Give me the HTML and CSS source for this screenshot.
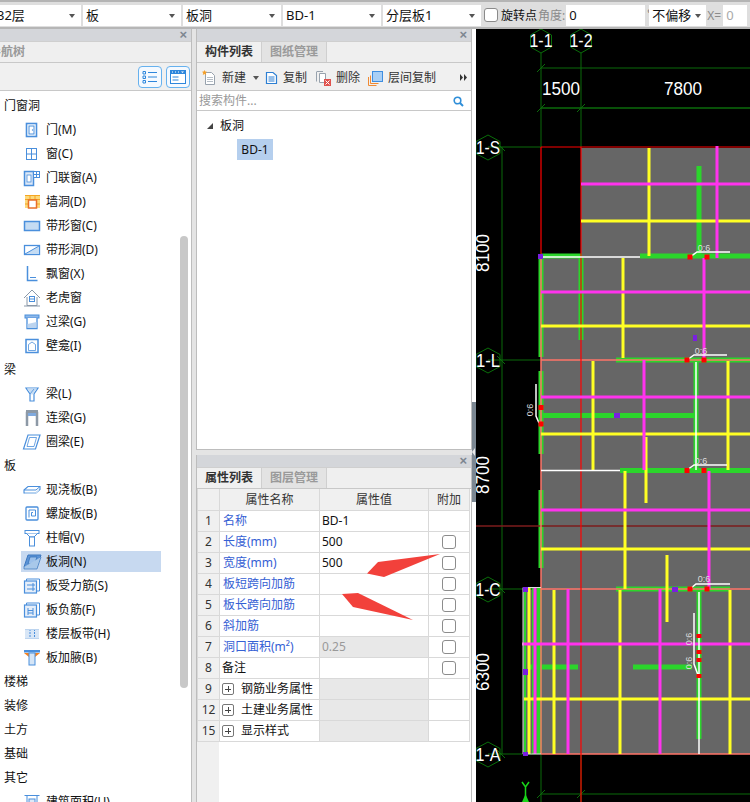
FILE: index.html
```html
<!DOCTYPE html>
<html lang="zh-CN">
<head>
<meta charset="utf-8">
<title>板洞</title>
<link rel="stylesheet" href="styles.css">
</head>
<body>
<svg class="defs" xmlns="http://www.w3.org/2000/svg">
  <symbol id="i-door" viewBox="0 0 20 20"><rect x="4.500" y="3.500" width="10" height="13" fill="#fff" stroke="#4a8fdc" stroke-width="1.600"/><rect x="7" y="6" width="5" height="8" fill="none" stroke="#4a8fdc"/><circle cx="10.500" cy="10" r=".7" fill="#4a8fdc"/></symbol>
  <symbol id="i-win" viewBox="0 0 20 20"><rect x="4.500" y="4.500" width="10" height="11" fill="#fff" stroke="#4a8fdc"/><path d="M9.500 4.500v11M4.500 10h10" stroke="#4a8fdc"/></symbol>
  <symbol id="i-doorwin" viewBox="0 0 20 20"><rect x="2.500" y="3.500" width="9" height="14" fill="#dce8f7" stroke="#4a8fdc" stroke-width="1.500"/><rect x="5" y="7" width="4" height="7" fill="#fff" stroke="#4a8fdc" stroke-width=".8"/><rect x="11.500" y="3.500" width="6" height="6" fill="#fff" stroke="#4a8fdc"/><path d="M14.500 3.500v6M11.500 6.500h6" stroke="#4a8fdc"/></symbol>
  <symbol id="i-hole" viewBox="0 0 20 20"><rect x="3" y="3" width="15" height="13" fill="#fcd97c"/><path d="M3 7.500h15M3 3.500h15M3 12h4M14 12h4M8 3v4M13 3v4" stroke="#f5a623" fill="none"/><rect x="6.500" y="8" width="8" height="8" fill="#fff" stroke="#e8702a" stroke-width="1.500"/></symbol>
  <symbol id="i-band" viewBox="0 0 20 20"><rect x="2.500" y="5.500" width="15" height="9" fill="#c5dcf3" stroke="#4a8fdc" stroke-width="1.500"/></symbol>
  <symbol id="i-bandh" viewBox="0 0 20 20"><rect x="2.500" y="5.500" width="15" height="9" fill="#fff" stroke="#4a8fdc" stroke-width="1.300"/><path d="M3 14L17 6v8z" fill="#c5dcf3"/><path d="M3 14L17 6" stroke="#4a8fdc"/></symbol>
  <symbol id="i-bay" viewBox="0 0 20 20"><path d="M5.500 2v14.500h10" fill="none" stroke="#4a8fdc" stroke-width="1.500"/><path d="M8 13.500h6" stroke="#4a8fdc"/></symbol>
  <symbol id="i-dormer" viewBox="0 0 20 20"><path d="M2 10l8-8 8 8M5 9v8.500h10V9M2 18h16" fill="none" stroke="#8a98a8"/><rect x="7.500" y="8.500" width="5" height="5" fill="#fff" stroke="#4a8fdc"/><path d="M7.500 11h5" stroke="#4a8fdc"/></symbol>
  <symbol id="i-lintel" viewBox="0 0 20 20"><rect x="3" y="3" width="14" height="3" fill="#8fb8e8" stroke="#4a8fdc"/><path d="M5 6v10.500h10V6" fill="#fff" stroke="#4a8fdc" stroke-width="1.300"/><path d="M5.500 16V12l9-2v6z" fill="#bcd4ef"/></symbol>
  <symbol id="i-niche" viewBox="0 0 20 20"><rect x="4" y="3.500" width="12" height="13" fill="#fff" stroke="#4a8fdc" stroke-width="1.500"/><path d="M6.500 14.500V8.500L10 6l3.500 2.500v6z" fill="#fff" stroke="#4a8fdc" stroke-width=".8"/></symbol>
  <symbol id="i-beam" viewBox="0 0 20 20"><path d="M4 4h12l-4 6v7H8v-7z" fill="#fff" stroke="#4a8fdc" stroke-width="1.200"/><path d="M5 4.500h10L10 11z" fill="#c5dcf3"/><path d="M8 10l4-5" stroke="#4a8fdc" stroke-width=".8"/></symbol>
  <symbol id="i-link" viewBox="0 0 20 20"><path d="M5 18V5h10v13" fill="none" stroke="#8d99a6" stroke-width="2.500"/><rect x="4" y="2" width="12" height="2" fill="#8d99a6"/><rect x="6" y="5" width="8" height="3" fill="#7fa9de"/></symbol>
  <symbol id="i-ring" viewBox="0 0 20 20"><path d="M6 3h12l-4.500 14H1.500z" fill="#fff" stroke="#4a8fdc" stroke-width="1.200"/><path d="M7.500 5.500h7L12 14.500H5z" fill="#fff" stroke="#4a8fdc" stroke-width=".8"/></symbol>
  <symbol id="i-cast" viewBox="0 0 20 20"><path d="M2 10l4-3.500h12v3l-4 3.500H2z" fill="#fff" stroke="#4a8fdc" stroke-width="1.100"/><path d="M2 10h12l4-3.500" fill="none" stroke="#4a8fdc"/><path d="M3 13h11l3-3" stroke="#c5dcf3" fill="none"/></symbol>
  <symbol id="i-spiral" viewBox="0 0 20 20"><rect x="4" y="3" width="12" height="13" rx="1" fill="#fff" stroke="#4a8fdc" stroke-width="1.300"/><path d="M7 13.500V6h6.500v6H9.500V8.500h1.500" fill="none" stroke="#4a8fdc"/></symbol>
  <symbol id="i-cap" viewBox="0 0 20 20"><rect x="3" y="2.500" width="14" height="3" fill="#fff" stroke="#4a8fdc"/><path d="M4.500 5.500L8 9h4l3.500-3.500" fill="#fff" stroke="#4a8fdc"/><rect x="7.500" y="9" width="5" height="9" fill="#fff" stroke="#4a8fdc"/></symbol>
  <symbol id="i-open" viewBox="0 0 20 20"><path d="M6 3h13l-4 12H2z" fill="#5b93d6" stroke="#3d78bf"/><path d="M8 5h7l-2.500 7H6z" fill="#9cc0ea" stroke="#2f6db5" stroke-width=".7"/><path d="M2 15v2h13l4-12" fill="#a8c8ea" stroke="#3d78bf" stroke-width=".7"/></symbol>
  <symbol id="i-rebar" viewBox="0 0 20 20"><rect x="2.500" y="5" width="12" height="12" fill="#e5eef9" stroke="#4a8fdc" stroke-width="1.200"/><path d="M4.500 5V3h13v12h-3" fill="none" stroke="#4a8fdc"/><path d="M5 9h8M5 13h8M11 7v8" stroke="#4a8fdc"/></symbol>
  <symbol id="i-neg" viewBox="0 0 20 20"><rect x="2.500" y="5" width="12" height="12" fill="#e5eef9" stroke="#4a8fdc" stroke-width="1.200"/><path d="M4.500 5V3h13v12h-3" fill="none" stroke="#4a8fdc"/><path d="M6 8v7M11 8v7M6 10.500h5M6 13h5" stroke="#4a8fdc"/></symbol>
  <symbol id="i-strip" viewBox="0 0 20 20"><rect x="3" y="5" width="14" height="10" fill="#d8e6f6"/><path d="M8 5v10M12.500 5v10" stroke="#4a8fdc" stroke-dasharray="2 1"/><path d="M3 5.500h14M3 14.500h14" stroke="#bcd4ef"/></symbol>
  <symbol id="i-haunch" viewBox="0 0 20 20"><rect x="2" y="2" width="16" height="2.500" fill="#4a8fdc"/><path d="M2 5h5v4zM18 5h-5v4z" fill="#f58220"/><rect x="7" y="5" width="6" height="12" fill="#d5e5f6" stroke="#4a8fdc"/></symbol>
  <symbol id="i-area" viewBox="0 0 20 20"><path d="M2.500 3.500h15M5 3.500v14h10v-14" fill="none" stroke="#4a8fdc"/><rect x="7" y="7" width="6" height="6" fill="#dce8f7" stroke="#4a8fdc"/></symbol>
</svg>

<div class="topbar">
  <div class="sel sel-first"><span class="clip">32层</span><i class="caret"></i></div>
  <div class="sel"><span>板</span><i class="caret"></i></div>
  <div class="sel"><span>板洞</span><i class="caret"></i></div>
  <div class="sel"><span>BD-1</span><i class="caret"></i></div>
  <div class="sel sel-last"><span>分层板1</span><i class="caret"></i></div>
  <span class="tb-check"></span>
  <span class="tb-label">旋转点</span>
  <span class="tb-label muted">角度:</span>
  <div class="tb-input tb-angle">0</div>
  <span class="tb-deg">°</span>
  <div class="sel sel-offset"><span>不偏移</span><i class="caret"></i></div>
  <span class="tb-label muted tb-x">X=</span>
  <div class="tb-input tb-xval">0</div>
</div>

<div class="main">
  <aside class="nav">
    <div class="titlebar"><span class="close">×</span></div>
    <div class="tabs nav-tabs"><span class="nav-title">导航树</span></div>
    <div class="nav-tools">
      <span class="view-btn"><svg width="16" height="14" viewBox="0 0 16 14"><path d="M1 1.500h2.500v2.500H1zM1 6h2.500v2.500H1zM1 10.500h2.500V13H1z" fill="none" stroke="#2d86dc"/><path d="M6 2.500h9M6 7h9M6 11.500h9" stroke="#2d86dc"/></svg></span>
      <span class="view-btn"><svg width="16" height="14" viewBox="0 0 16 14"><rect x=".5" y=".5" width="15" height="13" fill="#fff" stroke="#2d86dc"/><rect x="0" y="0" width="16" height="4" fill="#2d86dc"/><path d="M2 2h1M5 2h1M8 2h1" stroke="#fff"/><path d="M11 1.500h3l-1.500 1.500z" fill="#fff"/><path d="M2.500 7h6M2.500 10h6" stroke="#2d86dc"/></svg></span>
    </div>
    <div class="tree">
      <div class="grp">门窗洞</div>
      <div class="itm"><svg class="ico"><use href="#i-door"/></svg>门(M)</div>
      <div class="itm"><svg class="ico"><use href="#i-win"/></svg>窗(C)</div>
      <div class="itm"><svg class="ico"><use href="#i-doorwin"/></svg>门联窗(A)</div>
      <div class="itm"><svg class="ico"><use href="#i-hole"/></svg>墙洞(D)</div>
      <div class="itm"><svg class="ico"><use href="#i-band"/></svg>带形窗(C)</div>
      <div class="itm"><svg class="ico"><use href="#i-bandh"/></svg>带形洞(D)</div>
      <div class="itm"><svg class="ico"><use href="#i-bay"/></svg>飘窗(X)</div>
      <div class="itm"><svg class="ico"><use href="#i-dormer"/></svg>老虎窗</div>
      <div class="itm"><svg class="ico"><use href="#i-lintel"/></svg>过梁(G)</div>
      <div class="itm"><svg class="ico"><use href="#i-niche"/></svg>壁龛(I)</div>
      <div class="grp">梁</div>
      <div class="itm"><svg class="ico"><use href="#i-beam"/></svg>梁(L)</div>
      <div class="itm"><svg class="ico"><use href="#i-link"/></svg>连梁(G)</div>
      <div class="itm"><svg class="ico"><use href="#i-ring"/></svg>圈梁(E)</div>
      <div class="grp">板</div>
      <div class="itm"><svg class="ico"><use href="#i-cast"/></svg>现浇板(B)</div>
      <div class="itm"><svg class="ico"><use href="#i-spiral"/></svg>螺旋板(B)</div>
      <div class="itm"><svg class="ico"><use href="#i-cap"/></svg>柱帽(V)</div>
      <div class="itm on"><svg class="ico"><use href="#i-open"/></svg>板洞(N)</div>
      <div class="itm"><svg class="ico"><use href="#i-rebar"/></svg>板受力筋(S)</div>
      <div class="itm"><svg class="ico"><use href="#i-neg"/></svg>板负筋(F)</div>
      <div class="itm"><svg class="ico"><use href="#i-strip"/></svg>楼层板带(H)</div>
      <div class="itm"><svg class="ico"><use href="#i-haunch"/></svg>板加腋(B)</div>
      <div class="grp">楼梯</div>
      <div class="grp">装修</div>
      <div class="grp">土方</div>
      <div class="grp">基础</div>
      <div class="grp">其它</div>
      <div class="itm"><svg class="ico"><use href="#i-area"/></svg>建筑面积(U)</div>
    </div>
    <div class="nav-scroll"></div>
  </aside>

  <div class="mid">
    <section class="panel list-panel">
      <div class="titlebar"><span class="close">×</span></div>
      <div class="tabs"><span class="tab on">构件列表</span><span class="tab">图纸管理</span></div>
      <div class="tools">
        <span class="tool t-new"><svg width="15" height="16" viewBox="0 0 15 16"><path d="M3.500 2.500h6l3 3v9h-9z" fill="#fff" stroke="#98a2ad"/><path d="M5 7.500h6M5 9.500h6M5 11.500h6" stroke="#b5bdc5"/><path d="M2.500 0l.8 1.600L5 1.800 3.800 3 4.200 5 2.500 4 .8 5l.4-2L0 1.800l1.700-.2z" fill="#f5a02a"/></svg>新建<i class="caret tool-caret"></i></span>
        <span class="tool t-copy"><svg width="13" height="14" viewBox="0 0 13 14"><path d="M1.500 1.500h6.500l3.500 3v8h-10z" fill="#fff" stroke="#2d7fd3" stroke-width="1.200"/><path d="M3.500 6h6M3.500 8h6M3.500 10h6" stroke="#2d7fd3"/></svg>复制</span>
        <span class="tool t-del"><svg width="15" height="15" viewBox="0 0 15 15"><path d="M3.500 2.500h6v9h-6z" fill="#fff" stroke="#98a2ad"/><path d="M1 .5h6M.5 .5v10" stroke="#98a2ad"/><rect x="8" y="8" width="7" height="7" fill="#e0524d"/><path d="M9.500 9.500l4 4M13.500 9.500l-4 4" stroke="#fff"/></svg>删除</span>
        <span class="tool t-floor"><svg width="15" height="15" viewBox="0 0 15 15"><path d="M.5 6v8.500h8M2.500 4.500v8h8" fill="none" stroke="#ef8a34"/><rect x="4.500" y=".5" width="10" height="10" fill="#a9cff5" stroke="#3f8ee0"/></svg>层间复制</span>
        <svg class="more" width="7" height="7" viewBox="0 0 7 7"><path d="M0 0l3 3.500L0 7zM4 0l3 3.500L4 7z" fill="#333"/></svg>
      </div>
      <div class="search"><span>搜索构件...</span><svg width="11" height="11" viewBox="0 0 11 11"><circle cx="4.500" cy="4.500" r="3.300" fill="none" stroke="#2f8ed8" stroke-width="1.600"/><path d="M7 7l3 3" stroke="#2f8ed8" stroke-width="2"/></svg></div>
      <div class="list">
        <div class="list-grp"><i class="tri"></i>板洞</div>
        <div class="list-row"><span class="list-sel">BD-1</span></div>
      </div>
    </section>

    <section class="panel prop-panel">
      <div class="titlebar"><span class="close">×</span></div>
      <div class="tabs"><span class="tab on">属性列表</span><span class="tab">图层管理</span></div>
      <div class="prop-body">
        <table class="props">
          <colgroup><col class="c1"><col class="c2"><col class="c3"><col class="c4"></colgroup>
          <tr class="hd"><th></th><th>属性名称</th><th>属性值</th><th>附加</th></tr>
          <tr><td class="n">1</td><td class="k">名称</td><td class="v">BD-1</td><td></td></tr>
          <tr><td class="n">2</td><td class="k">长度(mm)</td><td class="v">500</td><td class="c"><i class="cb"></i></td></tr>
          <tr><td class="n">3</td><td class="k">宽度(mm)</td><td class="v">500</td><td class="c"><i class="cb"></i></td></tr>
          <tr><td class="n">4</td><td class="k">板短跨向加筋</td><td class="v"></td><td class="c"><i class="cb"></i></td></tr>
          <tr><td class="n">5</td><td class="k">板长跨向加筋</td><td class="v"></td><td class="c"><i class="cb"></i></td></tr>
          <tr><td class="n">6</td><td class="k">斜加筋</td><td class="v"></td><td class="c"><i class="cb"></i></td></tr>
          <tr><td class="n">7</td><td class="k">洞口面积(m²)</td><td class="v off">0.25</td><td class="c"><i class="cb"></i></td></tr>
          <tr><td class="n">8</td><td class="b">备注</td><td class="v"></td><td class="c"><i class="cb"></i></td></tr>
          <tr><td class="n">9</td><td class="b"><i class="plus"></i>钢筋业务属性</td><td class="v fill"></td><td></td></tr>
          <tr><td class="n">12</td><td class="b"><i class="plus"></i>土建业务属性</td><td class="v fill"></td><td></td></tr>
          <tr><td class="n">15</td><td class="b"><i class="plus"></i>显示样式</td><td class="v fill"></td><td></td></tr>
        </table>
      </div>
      <svg class="arrows" viewBox="196 455 275 347" width="275" height="347">
        <path d="M367 573.500L378 562 440 554 384 577z" fill="#f2413b"/>
        <path d="M342 594L358 593 413 620 353 607z" fill="#f2413b"/>
      </svg>
    </section>
  </div>

  <div class="split"><span class="grip"></span></div>

  <div class="cad">
    <svg class="cad-svg" viewBox="476 29 274 773" width="274" height="773">
      <!-- slabs -->
      <g class="slab">
        <rect x="581" y="148" width="169" height="108"/>
        <rect x="541" y="256" width="209" height="498"/>
        <rect x="523" y="587" width="18" height="167"/>
      </g>
      <!-- axes -->
      <g class="axis">
        <path d="M541 53V147M581 53V147M541 754V802M581 754V802"/>
        <path d="M541 68H750M541 794H750M488 147H541M488 360H541M488 589H541M488 754H541M502 147V754"/>
        <path class="thick" d="M541 108H750"/>
        <path d="M537 72l8-8M537 112l8-8M577 112l8-8M537 798l8-8M577 798l8-8"/>
        <path d="M497 143l8 8M497 356l8 8M497 585l8 8M497 750l8 8"/>
      </g>
      <g class="hex">
        <path d="M541 29l10.500 6v12l-10.500 6-10.500-6V35z"/>
        <path d="M581 29l10.500 6v12l-10.500 6-10.500-6V35z"/>
        <path d="M488 135l12 6.500v12l-12 6.500-12-6.500v-12z"/>
        <path d="M488 348l12 6.500v12l-12 6.500-12-6.500v-12z"/>
        <path d="M488 577l12 6.500v12l-12 6.500-12-6.500v-12z"/>
        <path d="M488 742l12 6.500v12l-12 6.500-12-6.500v-12z"/>
      </g>
      <!-- green walls -->
      <g class="wall">
        <path d="M699 166V256M541 256H582M640 256H750M581 258V340M541 258V357M541 371V454M541 490V568"/>
        <path d="M616 360H750M543 415.500H694M696 360V470M620 470.500H750M616 589H730M699 590V739"/>
        <path d="M530 667H578M633 667H692M539 588V754"/>
        <path class="narrow" d="M525 590V752M533 588V754"/>
      </g>
      <!-- outlines -->
      <path class="dimred" d="M476 526H750"/>
      <g class="salmon">
        <path d="M541 360H750M541 589H750M541 754H750M541 256V754"/>
      </g>
      <path class="red" d="M541 147H750M541 147V256M581 147V802"/>
      <!-- yellow -->
      <g class="yel">
        <path d="M649 148V256M623 258V358M593 361V471M728 361V470M625 471V589M646 437V503M667 555V622M554 590V754M620 590V754M730 590V754M529 588V754"/>
        <path d="M581 221H750M541 326H750M541 434H750M541 549H750M524 699H750"/>
      </g>
      <!-- magenta -->
      <g class="mag">
        <path d="M717 146V258M704 258V358M644 360V470M709 471V589M568 589V754M660 589V754M535 588V754"/>
        <path d="M581 184H750M541 292H750M541 397H750M541 510H750M522 644H750"/>
      </g>
      <!-- white -->
      <g class="wht">
        <path d="M541 257H640M541 470.500H620M696 362V470"/>
        <path d="M690 257l7-5h33M687 360l7-5h33M687 470l7-5h33M690 589l6-5h34"/>
        <path d="M536 384V416l3 7M694 613V652M694 652V664l4 11M699 592V754"/>
        <path class="thin" d="M523 587.500H541M523 587.500V754H541"/>
      </g>
      <g class="pur">
        <rect x="538" y="254" width="5" height="5"/><rect x="693" y="335" width="4" height="6"/><rect x="614" y="413" width="6" height="5"/>
        <rect x="672" y="587" width="6" height="5"/><rect x="523" y="587" width="5" height="5"/><rect x="523" y="669" width="5" height="6"/><rect x="523" y="752" width="5" height="4"/>
      </g>
      <g class="redsq">
        <rect x="687.500" y="254.500" width="5" height="5"/><rect x="704.500" y="254.500" width="5" height="5"/>
        <rect x="684.500" y="357.500" width="5" height="5"/><rect x="701.500" y="357.500" width="5" height="5"/>
        <rect x="538.500" y="405" width="5" height="5"/><rect x="538.500" y="421.500" width="5" height="5"/>
        <rect x="684.500" y="468" width="5" height="5"/><rect x="701.500" y="468" width="5" height="5"/>
        <rect x="687.500" y="586.500" width="5" height="5"/><rect x="704.500" y="586.500" width="5" height="5"/>
        <rect x="696.500" y="634" width="5" height="4"/><rect x="696.500" y="650" width="5" height="4"/><rect x="696.500" y="658" width="5" height="4"/><rect x="696.500" y="674" width="5" height="4"/>
      </g>
      <!-- Y axis marker -->
      <path class="ymark" d="M522 782l3.500 5 3.500-5M525.500 787V797"/>
      <path class="ytri" d="M525.500 794l3.500 8h-7z"/>
      <!-- texts -->
      <g class="lbl">
        <text x="541" y="47" class="hx" textLength="23" lengthAdjust="spacingAndGlyphs">1-1</text>
        <text x="581" y="47" class="hx" textLength="23" lengthAdjust="spacingAndGlyphs">1-2</text>
        <text x="488" y="154" class="hx" textLength="24" lengthAdjust="spacingAndGlyphs">1-S</text>
        <text x="488" y="367" class="hx" textLength="24" lengthAdjust="spacingAndGlyphs">1-L</text>
        <text x="488" y="596" class="hx" textLength="25" lengthAdjust="spacingAndGlyphs">1-C</text>
        <text x="488" y="761" class="hx" textLength="25" lengthAdjust="spacingAndGlyphs">1-A</text>
        <text x="561" y="95" class="dim" textLength="38" lengthAdjust="spacingAndGlyphs">1500</text>
        <text x="683" y="95" class="dim" textLength="38" lengthAdjust="spacingAndGlyphs">7800</text>
        <text class="dim" transform="translate(489 253) rotate(-90)" textLength="38" lengthAdjust="spacingAndGlyphs">8100</text>
        <text class="dim" transform="translate(489 475) rotate(-90)" textLength="38" lengthAdjust="spacingAndGlyphs">8700</text>
        <text class="dim" transform="translate(489 672) rotate(-90)" textLength="38" lengthAdjust="spacingAndGlyphs">6300</text>
        <text x="704" y="251" class="sm">0:6</text>
        <text x="701" y="354" class="sm">0:6</text>
        <text x="701" y="464" class="sm">0:6</text>
        <text x="704" y="582" class="sm">0:6</text>
        <text class="sm" transform="translate(533 410) rotate(-90)">0:6</text>
        <text class="sm" transform="translate(692 639) rotate(-90)">0:6</text>
        <text class="sm" transform="translate(692 663) rotate(-90)">0:6</text>
      </g>
    </svg>
  </div>
</div>
</body>
</html>
```

FILE: styles.css
```css
* { box-sizing: border-box; }
html, body { margin: 0; padding: 0; }
body {
  width: 750px;
  height: 802px;
  overflow: hidden;
  background: #e4e4e4;
  color: #111;
  font: 12px/1.2 "Noto Sans", "Noto Sans CJK SC", sans-serif;
}
.defs { display: none; }
i { font-style: normal; display: inline-block; }

/* top bar */
.topbar {
  height: 29px;
  padding-top: 3px;
  display: flex;
  align-items: flex-start;
  gap: 2px;
  background: #dedede;
  border-top: 2px solid #b4b4b4;
  border-bottom: 2px solid #b6b6b6;
  overflow: hidden;
}
.sel {
  width: 98px;
  height: 21px;
  flex: none;
  background: #fff;
  display: flex;
  align-items: center;
  justify-content: space-between;
  padding: 0 6px 0 3px;
  font-size: 13px;
}
.sel-first { width: 81px; padding-left: 0; }
.sel-first .clip { margin-left: -3px; }
.caret {
  width: 0;
  height: 0;
  border: 3.500px solid transparent;
  border-top: 4px solid #555;
  border-bottom: 0;
}
.tb-check {
  width: 14px;
  height: 14px;
  margin: 3px 0 0 1px;
  flex: none;
  background: #fff;
  border: 1px solid #8a8a8a;
  border-radius: 3px;
}
.tb-label { line-height: 21px; flex: none; font-size: 12px; margin-left: 1px; }
.muted { color: #8b8b8b; }
.tb-input {
  height: 21px;
  flex: none;
  background: #fff;
  padding-left: 3px;
  line-height: 21px;
  font-size: 13px;
}
.tb-label.muted { margin-left: -1px; }
.tb-angle { width: 79px; margin-left: -1px; }
.tb-deg { width: 4px; margin-right: -4px; color: #777; line-height: 18px; flex: none; }
.sel-offset { width: 57px; padding-left: 3px; padding-right: 5px; }
.tb-x { margin-left: 0; }
.tb-xval { width: 24px; color: #aaa; }

/* main layout */
.main { height: 773px; display: flex; }
.nav {
  position: relative;
  width: 192px;
  flex: none;
  background: #fff;
  border-right: 1px solid #bdbdbd;
  display: flex;
  flex-direction: column;
  overflow: hidden;
}
.mid {
  width: 276px;
  margin-left: 4px;
  flex: none;
  display: flex;
  flex-direction: column;
  gap: 5px;
}
.panel {
  position: relative;
  background: #fff;
  border-left: 1px solid #bdbdbd;
  border-right: 1px solid #bdbdbd;
  display: flex;
  flex-direction: column;
}
.list-panel { height: 421px; border-bottom: 1px solid #bdbdbd; }
.prop-panel { flex: 1; min-height: 0; overflow: hidden; }
.titlebar {
  height: 12px;
  flex: none;
  background: #d4d6da;
  display: flex;
  justify-content: flex-end;
  align-items: center;
  padding-right: 4px;
}
.close { color: #7d8690; font: bold 13px/12px "Liberation Sans", sans-serif; }
.tabs {
  height: 22px;
  flex: none;
  display: flex;
  background: #efefef;
  border-bottom: 1px solid #c8c8c8;
  border-top: 1px solid #cfcfcf;
}
.tab {
  width: 65px;
  text-align: center;
  font-weight: 700;
  line-height: 20px;
  color: #9a9a9a;
  background: #e3e3e3;
  border-right: 1px solid #cfcfcf;
}
.tab.on { color: #333; background: #f0f0f0; }

/* navigator */
.nav-title { margin-left: -11px; font-weight: 700; color: #999; line-height: 20px; }
.nav-tools {
  height: 28px;
  flex: none;
  background: #f0f0f0;
  border-bottom: 1px solid #c8c8c8;
  display: flex;
  justify-content: flex-end;
  gap: 4px;
  padding: 3px 1px 0 0;
}
.view-btn {
  width: 24px;
  height: 22px;
  background: #f4f9ff;
  border: 1px solid #66b1ee;
  border-radius: 4px;
  display: flex;
  align-items: center;
  justify-content: center;
}
.tree { padding-top: 3px; flex: 1; min-height: 0; overflow: hidden; }
.grp, .itm {
  height: 24px;
  display: flex;
  align-items: center;
  white-space: nowrap;
}
.grp { padding-left: 4px; }
.itm { width: 140px; margin-left: 21px; padding-left: 1px; gap: 4px; }
.itm.on { background: linear-gradient(#0000 1px, #c7d9f0 1px, #c7d9f0 22px, #0000 22px); }
.ico { width: 20px; height: 20px; flex: none; }
.nav-scroll {
  position: absolute;
  left: 180px;
  top: 207px;
  width: 8px;
  height: 452px;
  background: #c8c8c8;
  border-radius: 4px;
}

/* component list */
.tools {
  height: 28px;
  flex: none;
  display: flex;
  align-items: center;
  position: relative;
  background: #f0f0f0;
  border-bottom: 1px solid #c8c8c8;
  padding: 3px 0 0 5px;
  color: #333;
}
.tool { display: flex; align-items: center; gap: 5px; white-space: nowrap; }
.t-new { width: 63px; }
.t-copy { width: 51px; }
.t-del { width: 52px; }
.t-floor { width: 76px; }
.tool-caret { margin-left: 2px; }
.more { position: absolute; right: 4px; top: 11px; }
.search {
  height: 20px;
  flex: none;
  display: flex;
  align-items: center;
  justify-content: space-between;
  color: #999;
  padding: 2px 7px 0 2px;
  border-bottom: 1px solid #c8c8c8;
}
.list { flex: 1; }
.list-grp {
  height: 28px;
  padding: 2px 0 0 10px;
  display: flex;
  align-items: center;
  gap: 7px;
}
.tri {
  width: 0;
  height: 0;
  border-left: 6px solid transparent;
  border-bottom: 6px solid #444;
}
.list-row { height: 21px; padding-left: 40px; }
.list-sel {
  display: block;
  width: 36px;
  height: 21px;
  line-height: 21px;
  text-align: center;
  background: #b5cfee;
}

/* properties */
.prop-body {
  flex: 1;
  background: linear-gradient(90deg, #f0f0f0 22px, #fff 22px);
}
.props { border-collapse: collapse; table-layout: fixed; width: 272px; }
.c1 { width: 22px; }
.c2 { width: 100px; }
.c3 { width: 109px; }
.c4 { width: 41px; }
.props tr { height: 21px; }
.props th, .props td {
  height: 21px;
  padding: 1px 0 0;
  line-height: 14px;
  border: 1px solid #d9d9d9;
  border-top: 0;
  white-space: nowrap;
  overflow: hidden;
}
.props th { font-weight: 400; background: #f0f0f0; color: #333; }
.props .n { background: #f0f0f0; text-align: center; color: #333; }
.props .k { color: #3560d4; padding-left: 3px; }
.props .b { padding-left: 2px; color: #111; }
.props .v { padding-left: 2px; }
.props .off { background: #e8e8e8; color: #999; }
.props .fill { background: #e8e8e8; }
.props .c { padding: 0; }
.cb {
  display: block;
  width: 14px;
  height: 14px;
  margin: 0 auto;
  background: #fff;
  border: 1px solid #8c8c8c;
  border-radius: 3px;
}
.plus {
  width: 12px;
  height: 12px;
  margin-right: 7px;
  vertical-align: -2px;
  border: 1px solid #777;
  border-radius: 2px;
  background: linear-gradient(#444, #444) center / 6px 1px no-repeat, linear-gradient(#444, #444) center / 1px 6px no-repeat;
}
.arrows { position: absolute; left: -1px; top: 0; pointer-events: none; }

/* splitter */
.split {
  width: 4px;
  flex: none;
  background: #fff;
  position: relative;
}
.grip {
  position: absolute;
  left: 0;
  top: 373px;
  width: 4px;
  height: 100px;
  background: #7b8792;
}
.grip::after {
  content: "";
  position: absolute;
  left: 0;
  top: 46px;
  border: 4px solid transparent;
  border-left: 0;
  border-right: 3px solid #e8e8e8;
}

/* CAD canvas */
.cad { flex: 1; background: #000; overflow: hidden; }
.cad-svg { display: block; }
.cad-svg path, .cad-svg g { fill: none; }
.slab rect { fill: #666; }
.axis path { stroke: #0b6b0b; stroke-width: 1; }
.axis .thick { stroke-width: 1.500; }
.hex path { stroke: #0a6e0a; stroke-width: 1; }
.wall path { stroke: #2bd52b; stroke-width: 5; }
.wall .narrow { stroke-width: 2; }
.dimred { stroke: #7c1c1c; stroke-width: 1.500; }
.salmon path { stroke: #ff7468; stroke-width: 1.500; }
.red { stroke: #f00; stroke-width: 1.200; }
.yel path { stroke: #ffff24; stroke-width: 3; }
.mag path { stroke: #ff33ee; stroke-width: 3; }
.wht path { stroke: #fff; stroke-width: 1.500; }
.wht .thin { stroke: #ddd; stroke-width: 1; }
.pur rect { fill: #7a1fe0; }
.redsq rect { fill: #f00; }
.ymark { stroke: #19d419; stroke-width: 1.500; }
.cad-svg .ytri { fill: #19d419; }
.lbl text { fill: #fff; font-family: "Liberation Sans", sans-serif; }
.hx { font-size: 18px; text-anchor: middle; }
.dim { font-size: 18px; text-anchor: middle; }
.lbl .sm { font-size: 9px; text-anchor: middle; fill: #ddd; }
```
